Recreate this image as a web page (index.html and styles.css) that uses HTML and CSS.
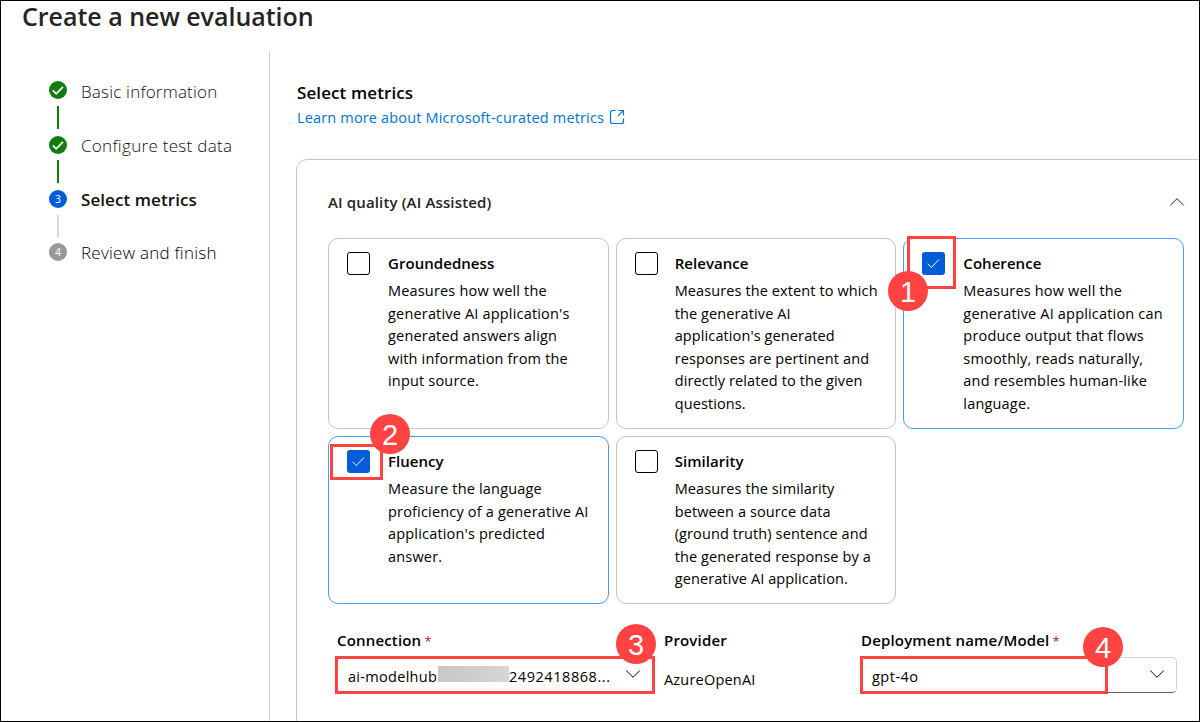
FILE: index.html
```html
<!DOCTYPE html>
<html lang="en">
<head>
<meta charset="utf-8">
<title>Create a new evaluation</title>
<link rel="stylesheet" href="styles.css">
</head>
<body>
<div class="page">
  <h1 class="page-title"><span>Create a new evaluation</span></h1>
  <div class="layout">
    <nav class="steps">
      <div class="step done">
        <span class="dot"><svg width="18" height="18" viewBox="0 0 18 18"><path d="M3.8 9.4 7.2 12.8 14 5.8" /></svg></span>
        <span class="step-label s1">Basic information</span>
      </div>
      <div class="line green l1"></div>
      <div class="step done">
        <span class="dot"><svg width="18" height="18" viewBox="0 0 18 18"><path d="M3.8 9.4 7.2 12.8 14 5.8" /></svg></span>
        <span class="step-label s2">Configure test data</span>
      </div>
      <div class="line green l2"></div>
      <div class="step current">
        <span class="dot">3</span>
        <span class="step-label s3">Select metrics</span>
      </div>
      <div class="line l3"></div>
      <div class="step todo">
        <span class="dot">4</span>
        <span class="step-label s4">Review and finish</span>
      </div>
    </nav>
    <main class="main">
      <h2 class="heading"><span>Select metrics</span></h2>
      <a class="learn"><span>Learn more about Microsoft-curated metrics</span>
        <svg width="16" height="16" viewBox="0 0 16 16"><path d="M6.5 1.5H3.5a2 2 0 0 0-2 2v9a2 2 0 0 0 2 2h9a2 2 0 0 0 2-2V9.5M9.5 1.5h5v5M14.3 1.7 9 7" /></svg>
      </a>
      <section class="panel">
        <header class="panel-head">
          <span class="panel-title">AI quality (AI Assisted)</span>
          <svg width="16" height="10" viewBox="0 0 16 10"><path d="M1.2 8.5 8 1.7 14.8 8.5" /></svg>
        </header>
        <div class="cards">
          <article class="card">
            <span class="check"></span>
            <div><h3>Groundedness</h3><p>Measures how well the<br>generative AI application's<br>generated answers align<br>with information from the<br>input source.</p></div>
          </article>
          <article class="card middle">
            <span class="check"></span>
            <div><h3>Relevance</h3><p>Measures the extent to which<br>the generative AI<br>application's generated<br>responses are pertinent and<br>directly related to the given<br>questions.</p></div>
          </article>
          <article class="card selected">
            <span class="check"><svg width="23" height="23" viewBox="0 0 23 23"><path d="M5.5 11.7 9.3 15.5 17 7.5" /></svg></span>
            <div><h3>Coherence</h3><p>Measures how well the<br>generative AI application can<br>produce output that flows<br>smoothly, reads naturally,<br>and resembles human-like<br>language.</p></div>
          </article>
          <article class="card selected">
            <span class="check"><svg width="23" height="23" viewBox="0 0 23 23"><path d="M5.5 11.7 9.3 15.5 17 7.5" /></svg></span>
            <div><h3>Fluency</h3><p>Measure the language<br>proficiency of a generative AI<br>application's predicted<br>answer.</p></div>
          </article>
          <article class="card middle">
            <span class="check"></span>
            <div><h3>Similarity</h3><p>Measures the similarity<br>between a source data<br>(ground truth) sentence and<br>the generated response by a<br>generative AI application.</p></div>
          </article>
        </div>
        <div class="fields">
          <div class="field">
            <label>Connection <i>*</i></label>
            <div class="select"><span class="v-conn">ai-modelhub</span><span class="mask"></span><span class="v-num">2492418868...</span><svg width="16" height="10" viewBox="0 0 16 10"><path d="M1.2 1.5 8 8.3 14.8 1.5" /></svg></div>
          </div>
          <div class="field">
            <label>Provider</label>
            <span class="plain">AzureOpenAI</span>
          </div>
          <div class="field">
            <label class="dep">Deployment name/Model <i>*</i></label>
            <div class="select"><span class="v-gpt">gpt-4o</span><svg width="16" height="10" viewBox="0 0 16 10"><path d="M1.2 1.5 8 8.3 14.8 1.5" /></svg></div>
          </div>
        </div>
      </section>
    </main>
  </div>
  <div class="mark m1"></div><div class="num n1">1</div>
  <div class="mark m2"></div><div class="num n2">2</div>
  <div class="mark m3"></div><div class="num n3">3</div>
  <div class="mark m4"></div><div class="num n4">4</div>
</div>
</body>
</html>
```
FILE: styles.css
```css
* { box-sizing: border-box; }
body { margin: 0; font-family: "Open Sans", "Noto Sans", sans-serif; font-size: 14.5px; font-weight: 400; color: #000; background: #fff; }
h1, h2, h3, p { margin: 0; }
svg { display: block; flex: none; fill: none; stroke: currentColor; }
.page { position: relative; width: 1200px; height: 722px; border: 1px solid #000; overflow: hidden; display: flex; flex-direction: column; }
.page-title { height: 50px; padding-left: 21px; font-size: 25px; font-weight: 550; line-height: 30px; color: #242424; letter-spacing: -0.02px; white-space: nowrap; }
.layout { display: flex; flex: 1; min-height: 0; }

.steps { width: 269px; flex: none; border-right: 1px solid #d1d1d1; padding: 30px 0 0 48px; }
.step { display: flex; align-items: center; gap: 14px; height: 18px; font-size: 17px; font-weight: 300; color: #111; white-space: nowrap; }
.step-label { line-height: 18px; padding-top: 2px; }
.s1 { letter-spacing: 0.2px; padding-top: 3px; }
.s2 { letter-spacing: 0.3px; }
.s4 { color: #000; letter-spacing: 0.25px; }
.dot { width: 18px; height: 18px; flex: none; border-radius: 50%; background: #107c10; color: #fff; font-size: 10.5px; font-weight: 400; line-height: 18px; text-align: center; }
.dot svg { stroke-width: 1.7; }
.current .dot { background: #015cda; }
.current .step-label { font-weight: 600; letter-spacing: 0.08px; }
.todo .dot { background: #999; }
.line { width: 2px; margin-left: 8px; height: 23px; background: #d9d9d9; }
.line.green { background: #107c10; }
.l1 { margin-top: 7px; margin-bottom: 7px; }
.l2 { margin-top: 6px; margin-bottom: 7px; }
.l3 { margin-top: 7px; margin-bottom: 6px; height: 22px; }

.main { flex: 1; min-width: 0; padding: 30px 0 0 26px; }
.heading { padding-left: 1px; font-size: 17px; font-weight: 600; line-height: 24px; letter-spacing: 0.1px; }
.learn { display: flex; align-items: center; gap: 5px; height: 24px; padding-left: 1px; letter-spacing: 0.16px; color: #0074d0; white-space: nowrap; }
.learn svg { stroke-width: 1.2; }
.panel { width: 920px; height: 620px; margin-top: 30px; border: 1px solid #c4c4c4; border-radius: 11px; padding: 30px 31px; }
.panel-head { display: flex; align-items: center; justify-content: space-between; width: 857px; height: 24px; font-size: 15px; letter-spacing: 0.14px; color: #242424; font-weight: 600; }
.cards { display: grid; grid-template-columns: repeat(3, 1fr); grid-template-rows: 191px 168px; gap: 7px; width: 856px; margin-top: 24px; }
.card { display: flex; align-items: flex-start; gap: 18px; border: 1px solid #c4c4c4; border-radius: 10px; padding: 13px 0 0 18px; }
.card.middle { gap: 17px; }
.card.selected { border-color: #479ef5; }
.check { width: 23px; height: 23px; flex: none; border: 1px solid #000; border-radius: 3px; }
.selected .check { border: 0; background: #015cda; color: #fff; }
h3 { font-size: 15px; font-weight: 600; line-height: 22px; letter-spacing: 0.05px; }
.card p { margin-top: 6px; line-height: 22.5px; letter-spacing: 0.18px; white-space: nowrap; }
.card.middle p { letter-spacing: 0.11px; }

.fields { display: grid; grid-template-columns: 327px 197px 316px; margin: 25px 0 0 9px; }
label { display: block; height: 24px; font-size: 15px; font-weight: 600; line-height: 22px; letter-spacing: 0.17px; white-space: nowrap; }
label i { margin-left: -1px; font-size: 13px; color: #c50f1f; font-style: normal; font-weight: 400; }
.select { display: flex; align-items: center; height: 36px; margin-top: 4px; border: 1px solid #d1d1d1; border-bottom-color: #616161; border-radius: 5px; padding: 2px 11px 0 10px; letter-spacing: 0.5px; white-space: nowrap; }
.field:first-child .select { width: 316px; }
.select svg { margin: -5px 0 0 auto; }
.v-conn { width: 90px; letter-spacing: 0.3px; }
.v-num { letter-spacing: 0.55px; }
.mask { width: 71px; height: 16px; margin: -5px 0 0; background: linear-gradient(90deg, #c7c7c7, #d6d6d6); }
.plain { display: block; margin-top: 15px; line-height: 24px; letter-spacing: 0.2px; }

.mark { position: absolute; border: 3px solid #ff4343; }
.num { position: absolute; width: 40px; height: 40px; border-radius: 50%; background: #ff4343; color: #fff; font: 29px/42px "Liberation Sans", Arial, sans-serif; text-align: center; }
.m1 { left: 906px; top: 235px; width: 49px; height: 53px; }
.n1 { left: 887px; top: 270px; }
.m2 { left: 329px; top: 443px; width: 53px; height: 36px; }
.n2 { left: 369px; top: 413px; }
.m3 { left: 334px; top: 655px; width: 320px; height: 38px; }
.n3 { left: 615px; top: 623px; }
.m4 { left: 859px; top: 655px; width: 248px; height: 38px; }
.n4 { left: 1082px; top: 626px; }
```
